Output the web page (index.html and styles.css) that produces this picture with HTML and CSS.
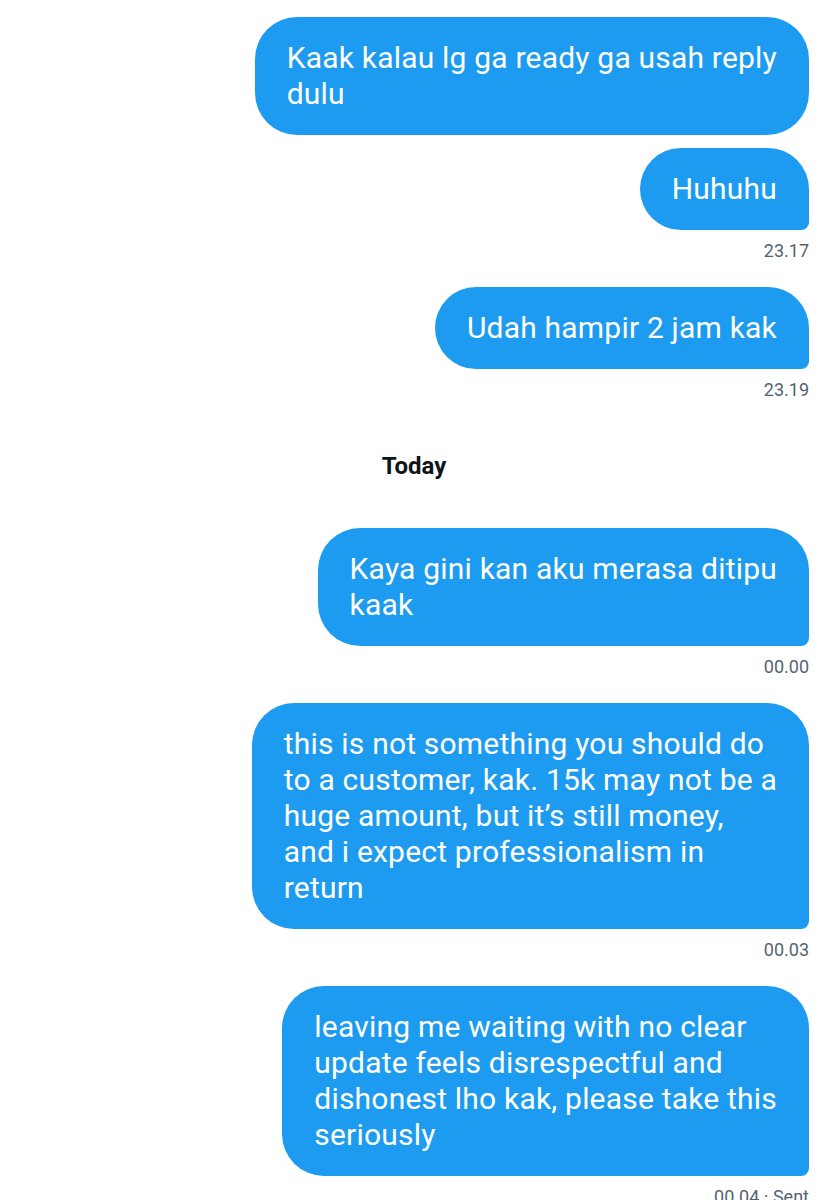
FILE: index.html
```html
<!DOCTYPE html>
<html lang="id">
<head>
  <meta charset="UTF-8">
  <title>Messages</title>
  <link rel="stylesheet" href="styles.css">
</head>
<body>
  <div class="chat">
    <div class="group">
      <div class="bubble">Kaak kalau lg ga ready ga usah reply<br>dulu</div>
      <div class="bubble last">Huhuhu</div>
      <div class="time">23.17</div>
    </div>

    <div class="group">
      <div class="bubble last">Udah hampir 2 jam kak</div>
      <div class="time">23.19</div>
    </div>

    <div class="day">Today</div>

    <div class="group">
      <div class="bubble last">Kaya gini kan aku merasa ditipu<br>kaak</div>
      <div class="time">00.00</div>
    </div>

    <div class="group">
      <div class="bubble last">this is not something you should do<br>to a customer, kak. 15k may not be a<br>huge amount, but it’s still money,<br>and i expect professionalism in<br>return</div>
      <div class="time">00.03</div>
    </div>

    <div class="group">
      <div class="bubble last">leaving me waiting with no clear<br>update feels disrespectful and<br>dishonest lho kak, please take this<br>seriously</div>
      <div class="time">00.04 · Sent</div>
    </div>
  </div>
</body>
</html>
```

FILE: styles.css
```css
body {
  margin: 0;
  background: #fff;
  font-family: Roboto, "Liberation Sans", sans-serif;
}

.chat {
  display: flex;
  flex-direction: column;
  padding: 17px 19px 0;
}

.group {
  display: flex;
  flex-direction: column;
  align-items: flex-end;
  gap: 13px;
  margin-bottom: 24px;
}

.bubble {
  background-color: #1d9bf0;
  color: #fff;
  font-size: 30px;
  line-height: 36px;
  letter-spacing: 0.2px;
  padding: 23px 32px;
  border-radius: 42px;
  white-space: nowrap;
}

.bubble.last {
  border-bottom-right-radius: 8px;
}

.time {
  margin-top: -4px;
  font-size: 18px;
  line-height: 24px;
  color: #536471;
}

.day {
  align-self: center;
  margin: 26px 0 48px;
  font-size: 24px;
  line-height: 28px;
  font-weight: bold;
  color: #0f1419;
}
```
